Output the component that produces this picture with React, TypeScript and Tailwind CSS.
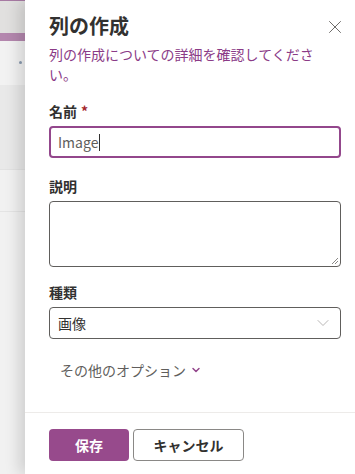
import { ChevronDown, X } from "lucide-react";

const FONT = {
  fontFamily: '"Segoe UI", "Noto Sans CJK JP", "Noto Sans", sans-serif',
};

function Label({ text, required }: { text: string; required?: boolean }) {
  return (
    <div className="py-[5px] text-[14px] leading-5 font-semibold text-[#323130]">
      {text}
      {required && <span className="ml-1 text-[#a4262c]">*</span>}
    </div>
  );
}

export default function App() {
  return (
    <div className="flex h-[474px] w-[355px] overflow-hidden bg-white" style={FONT}>
      {/* Page behind the panel */}
      <div className="flex w-[25px] shrink-0 flex-col bg-[#f1f1f1]">
        <div className="h-px bg-[#a77aa3]" />
        <div className="h-[32px] bg-[#e1e0df]" />
        <div className="h-[8px] bg-[#b487ae]" />
        <div className="relative h-[44px] bg-[#f2f2f2]">
          <div className="absolute top-[20px] left-[19px] h-[3px] w-[3px] rounded-full bg-[#8a9bb0]" />
        </div>
        <div className="h-[85px] border-b border-[#e2e2e2] bg-[#e9e9e9]" />
        <div className="h-[42px] border-b border-[#e4e4e4] bg-[#f1f1f1]" />
        <div className="flex-1 bg-[#f1f1f1]" />
      </div>

      {/* Panel */}
      <div className="relative z-10 flex flex-1 flex-col bg-white shadow-[-6px_0_14px_rgba(0,0,0,0.14)]">
        <div className="flex flex-col pr-[14px] pl-6">
          <div className="flex items-start justify-between pt-3">
            <h1 className="text-[20px] leading-7 font-semibold text-[#323130]">列の作成</h1>
            <X className="mt-[4px] -mr-[5px] h-[22px] w-[22px] text-[#605e5c]" strokeWidth={1} />
          </div>
          <p className="mt-1 w-[272px] text-[14px] leading-5 text-[#8b3b87]">
            列の作成についての詳細を確認してください。
          </p>

          <div className="mt-3">
            <Label text="名前" required />
            <div className="flex h-[32px] items-center rounded-sm border-2 border-[#93478c] px-[7px] text-[14px] text-[#605e5c]">
              Image
              <span className="ml-px h-[17px] w-px bg-[#323130]" />
            </div>
          </div>

          <div className="mt-[13px]">
            <Label text="説明" />
            <div className="relative h-[66px] rounded-sm border border-[#605e5c]">
              <svg className="absolute right-[1px] bottom-[1px]" width="9" height="9" viewBox="0 0 9 9">
                <path d="M8 2 L2 8 M8 5 L5 8" stroke="#8a8886" strokeWidth="1" />
              </svg>
            </div>
          </div>

          <div className="mt-[10px]">
            <Label text="種類" />
            <div className="flex h-[32px] items-center justify-between rounded-sm border border-[#605e5c] pr-[7px] pl-[8px] text-[14px] text-[#323130]">
              画像
              <ChevronDown className="h-[20px] w-[20px] text-[#a19f9d]" strokeWidth={0.9} />
            </div>
          </div>

          <div className="mt-[21px] flex h-5 items-center pl-[11px] text-[14px] text-[#605e5c]">
            その他のオプション
            <ChevronDown className="ml-[4px] h-[12px] w-[12px] text-[#93478c]" strokeWidth={3} />
          </div>
        </div>

        <div className="mt-[32px] border-t border-[#edebe9]" />

        <div className="flex gap-1 px-6 pt-[16px]">
          <button className="h-[32px] w-[80px] rounded-sm bg-[#974a8c] text-[14px] font-semibold text-white">
            保存
          </button>
          <button className="h-[32px] w-[111px] rounded-sm border border-[#8a8886] bg-white text-[14px] font-semibold text-[#323130]">
            キャンセル
          </button>
        </div>
      </div>
    </div>
  );
}
